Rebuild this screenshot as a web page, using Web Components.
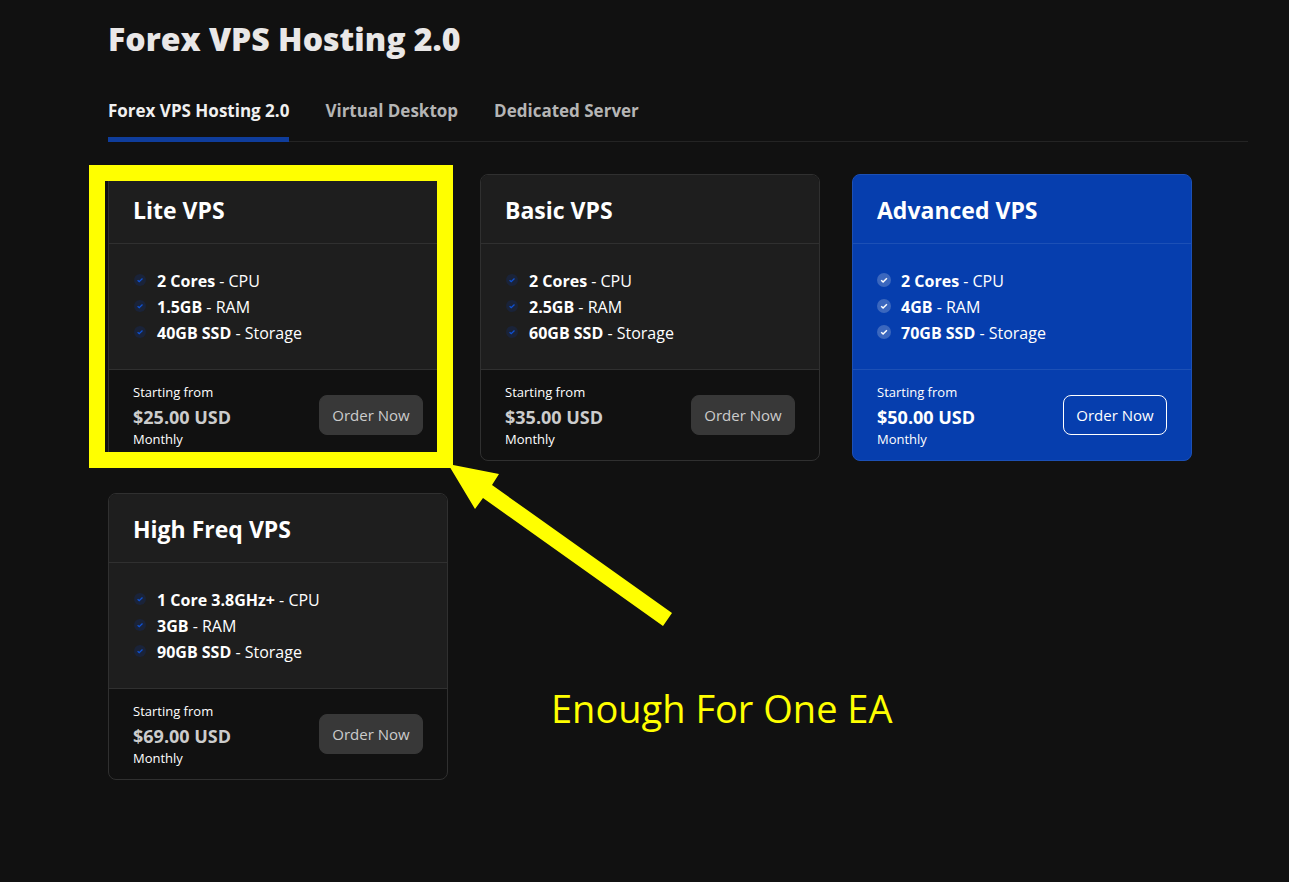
<!DOCTYPE html>
<html lang="en">
<head>
<meta charset="utf-8">
<meta name="viewport" content="width=device-width, initial-scale=1">
<title>Forex VPS Hosting 2.0</title>
<style>
  html { background: #111; }
  body { margin: 0; background: #111; color: #fff; font-family: "Open Sans", "Noto Sans", sans-serif; }
</style>
</head>
<body>
<store-page>
  <h1 slot="title">Forex VPS Hosting 2.0</h1>
  <tab-bar slot="tabs">
    <tab-link current>Forex VPS Hosting 2.0</tab-link>
    <tab-link>Virtual Desktop</tab-link>
    <tab-link>Dedicated Server</tab-link>
  </tab-bar>
  <highlight-note note="Enough For One EA">
    <plan-card price="$25.00 USD">
      <span slot="name">Lite VPS</span>
      <plan-feature><b>2 Cores</b> - CPU</plan-feature>
      <plan-feature><b>1.5GB</b> - RAM</plan-feature>
      <plan-feature><b>40GB SSD</b> - Storage</plan-feature>
    </plan-card>
  </highlight-note>
  <plan-card price="$35.00 USD">
    <span slot="name">Basic VPS</span>
    <plan-feature><b>2 Cores</b> - CPU</plan-feature>
    <plan-feature><b>2.5GB</b> - RAM</plan-feature>
    <plan-feature><b>60GB SSD</b> - Storage</plan-feature>
  </plan-card>
  <plan-card price="$50.00 USD" featured>
    <span slot="name">Advanced VPS</span>
    <plan-feature><b>2 Cores</b> - CPU</plan-feature>
    <plan-feature><b>4GB</b> - RAM</plan-feature>
    <plan-feature><b>70GB SSD</b> - Storage</plan-feature>
  </plan-card>
  <plan-card price="$69.00 USD">
    <span slot="name">High Freq VPS</span>
    <plan-feature><b>1 Core 3.8GHz+</b> - CPU</plan-feature>
    <plan-feature><b>3GB</b> - RAM</plan-feature>
    <plan-feature><b>90GB SSD</b> - Storage</plan-feature>
  </plan-card>
</store-page>

<script>
class Base extends HTMLElement {
  constructor() {
    super();
    this.attachShadow({ mode: "open" }).innerHTML = this.constructor.markup;
  }
}

customElements.define("store-page", class extends Base {
  static markup = `
    <style>
      :host { display: block; padding: 19px 41px 40px 108px; }
      ::slotted(h1) { margin: 0; font-size: 32px; line-height: 40px; font-weight: 800; color: #e9e7e7; }
      .tabs { margin-top: 31px; }
      .plans { display: grid; grid-template-columns: repeat(auto-fill, 340px); gap: 32px; margin-top: 32px; }
    </style>
    <header><slot name="title"></slot></header>
    <div class="tabs"><slot name="tabs"></slot></div>
    <main class="plans"><slot></slot></main>`;
});

customElements.define("tab-bar", class extends Base {
  static markup = `
    <style>
      :host { display: block; }
      nav { display: flex; gap: 36px; border-bottom: 1px solid #242424; }
    </style>
    <nav aria-label="Products"><slot></slot></nav>`;
});

customElements.define("tab-link", class extends Base {
  static markup = `
    <style>
      :host { display: block; margin-bottom: -1px; }
      a { display: block; padding: 8px 0 14px; border-bottom: 5px solid transparent; color: #b5b5b5;
          font-size: 17px; line-height: 25px; font-weight: 700; text-decoration: none; white-space: nowrap; }
      :host([current]) a { color: #f0f0f0; border-color: #0f3d9c; }
    </style>
    <a href="#"><slot></slot></a>`;
});

customElements.define("plan-card", class extends Base {
  static markup = `
    <style>
      :host { display: block; box-sizing: border-box; overflow: hidden; border-radius: 8px;
              border: 1px solid var(--line); background: #111;
              --line: #303030; --panel: #1e1e1e; --price: #ccc;
              --tick: #0f51d2; --tick-bg: #1a2339; --tick-size: 12px; }
      :host([featured]) { --line: #1c50b6; --panel: #063eae; --price: #fff; --tick: #fff; --tick-bg: #3b67be;
                          --tick-size: 14px; background: #063eae; }
      h2 { margin: 0; padding: 18px 24px 15px; font-size: 23px; line-height: 35px; font-weight: 700;
           background: var(--panel); border-bottom: 1px solid var(--line); }
      .features { padding: 24px 24px 23px; background: var(--panel); border-bottom: 1px solid var(--line); }
      footer { display: flex; align-items: center; justify-content: space-between; padding: 12px 24px; }
      .terms { font-size: 13px; line-height: 20px; }
      .price { margin-top: 3px; color: var(--price); font-size: 18px; line-height: 25px; font-weight: 700; }
      .period { line-height: 18px; }
      button { box-sizing: border-box; min-width: 104px; height: 40px; padding: 0 12px; border: 1px solid #383838;
               border-radius: 8px; background: #383838; color: #ccc; font: 15px/20px "Open Sans", "Noto Sans", sans-serif; }
      :host([featured]) button { background: transparent; border-color: #fff; color: #fff; }
    </style>
    <h2><slot name="name"></slot></h2>
    <div class="features" role="list"><slot></slot></div>
    <footer>
      <div class="terms">
        <div>Starting from</div>
        <div class="price"></div>
        <div class="period">Monthly</div>
      </div>
      <button type="button">Order Now</button>
    </footer>`;
  connectedCallback() {
    this.shadowRoot.querySelector(".price").textContent = this.getAttribute("price");
  }
});

customElements.define("plan-feature", class extends Base {
  static markup = `
    <style>
      :host { display: flex; gap: 10px; font-size: 16px; line-height: 26px; color: #fff; }
      .mark { flex: none; display: flex; justify-content: center; width: 14px; padding-top: 5px; }
      svg { width: var(--tick-size); height: 14px; }
      circle { fill: var(--tick-bg); }
      path { fill: none; stroke: var(--tick); stroke-width: 1.5; }
    </style>
    <span class="mark"><svg viewBox="0 0 14 14" aria-hidden="true"><circle cx="7" cy="7" r="7"/><path d="M4.2 7.2 6.1 9 9.9 5.2"/></svg></span>
    <span><slot></slot></span>`;
  connectedCallback() { this.setAttribute("role", "listitem"); }
});

/* Yellow frame around a card, with an arrow and a caption laid over the grid. */
customElements.define("highlight-note", class extends Base {
  static markup = `
    <style>
      :host { display: block; position: relative; }
      .frame { position: absolute; z-index: 1; inset: -9px -5px -7px -19px; border: 16px solid #ff0; pointer-events: none; }
      svg { position: absolute; z-index: 1; left: 340px; top: 290px; width: 225px; height: 163px; pointer-events: none; }
      .note { position: absolute; z-index: 1; left: 443px; top: 508px; margin: 0; color: #ff0;
              font-size: 38px; line-height: 52px; white-space: nowrap; }
    </style>
    <slot></slot>
    <div class="frame"></div>
    <svg viewBox="0 0 225 163" aria-hidden="true"><path fill="#ff0" d="M0 0 51 10 44 21 224 149 215 162 35 34 27 45Z"/></svg>
    <p class="note"></p>`;
  connectedCallback() {
    this.shadowRoot.querySelector(".note").textContent = this.getAttribute("note");
  }
});
</script>
</body>
</html>
